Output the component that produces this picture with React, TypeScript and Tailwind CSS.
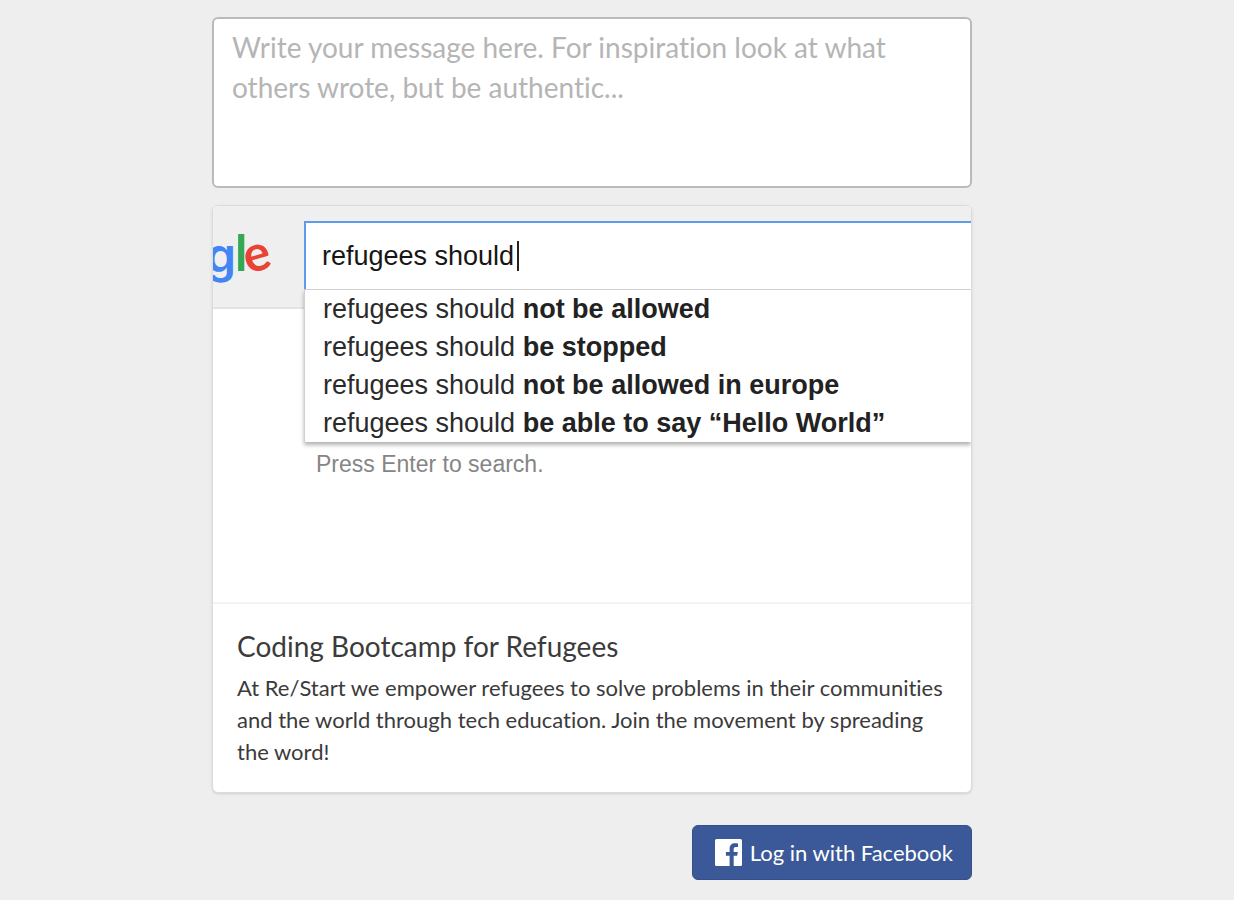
const suggestions = [
  { id: 1, text: "not be allowed" },
  { id: 2, text: "be stopped" },
  { id: 3, text: "not be allowed in europe" },
  { id: 4, text: "be able to say “Hello World”" },
];

function GoogleLogo() {
  return (
    <svg
      viewBox="0 0 60 60"
      className="h-[60px] w-[60px] font-['Lato',sans-serif] font-bold"
      role="img"
      aria-label="Google"
    >
      {/* g, cropped by the card edge */}
      <text x="-7" y="42" fontSize="48" fill="#4285f4" className="font-['Inter',sans-serif] font-semibold">
        g
      </text>
      <text x="22" y="41" fontSize="50" fill="#34a853">
        l
      </text>
      <text x="35" y="44" fontSize="50" fill="#ea4335" rotate="-16">
        e
      </text>
    </svg>
  );
}

function FacebookIcon() {
  return (
    <svg viewBox="0 0 27 27" className="size-[27px]" aria-hidden="true">
      <rect width="27" height="27" rx="1.5" fill="#fff" />
      <path
        fill="#3b5998"
        d="M14.6 27V16.8h-3.7V13h3.7V9.9c0-3.6 2.1-5.6 5.3-5.6 1.5 0 2.7.1 3.1.2v3.6h-2.1c-1.7 0-2.2.9-2.2 2.2V13h4.1l-.6 3.8h-3.5V27z"
      />
    </svg>
  );
}

function SearchPreview() {
  return (
    <div className="relative h-[398px] overflow-hidden rounded-t-md border-b-2 border-[#f3f3f3] font-['Liberation_Sans',Arial,sans-serif]">
      {/* Header strip behind the search box */}
      <div className="h-[103px] border-b-2 border-[#e3e3e3] bg-[#efefef] pt-6">
        <GoogleLogo />
      </div>

      {/* Search box and suggestions lie over the strip */}
      <div className="absolute top-[15px] right-0 left-[91px]">
        <div className="relative border-t-2 border-l-2 border-[#5e9be8] bg-white">
          <input
            type="text"
            aria-label="Search"
            defaultValue="refugees should"
            className="block h-[66px] w-full bg-white px-4 text-[27px] text-[#161616] outline-none"
          />
          <span className="absolute top-[18px] left-[211px] h-[30px] w-0.5 bg-[#222]" />
        </div>
        <ul className="border-t border-l border-[#d0d0d0] bg-white pl-[18px] text-[27px] leading-[38px] text-[#2b2b2b] shadow-[0_3px_4px_rgba(0,0,0,0.3)]">
          {suggestions.map((item) => (
            <li key={item.id} className="whitespace-nowrap">
              refugees should <b className="text-[#222]">{item.text}</b>
            </li>
          ))}
        </ul>
        <p className="mt-1 pl-3 text-[23px] leading-9 text-[#858585]">Press Enter to search.</p>
      </div>
    </div>
  );
}

export default function App() {
  return (
    <main className="min-h-screen bg-[#eeeeee] pt-[17px] pr-[50px] pb-5 font-['Lato',sans-serif] text-[#3b3b3b] [font-variant-ligatures:none]">
      <form className="mx-auto max-w-[760px]">
        <textarea
          aria-label="Your message"
          placeholder="Write your message here. For inspiration look at what others wrote, but be authentic..."
          className="block h-[171px] w-full resize-none rounded-md border-2 border-[#bababa] bg-white px-[18px] py-2 text-[28px] leading-10 outline-none placeholder:text-[#b5b5b5]"
        />

        {/* Shared link card */}
        <article className="mt-[17px] rounded-md border border-[#dcdcdc] bg-white shadow-sm">
          <SearchPreview />
          <div className="px-6 pt-[22px] pb-6">
            <h2 className="text-[28px] leading-10">Coding Bootcamp for Refugees</h2>
            <p className="mt-1.5 text-[22px] leading-8">
              At Re/Start we empower refugees to solve problems in their communities and the world
              through tech education. Join the movement by spreading the word!
            </p>
          </div>
        </article>

        <div className="mt-8 flex justify-end">
          <button
            type="button"
            className="flex h-[55px] items-center gap-2 rounded-md border border-[#34508c] bg-[#3b5998] pr-[18px] pl-[22px] text-[22px] text-white"
          >
            <FacebookIcon />
            Log in with Facebook
          </button>
        </div>
      </form>
    </main>
  );
}
